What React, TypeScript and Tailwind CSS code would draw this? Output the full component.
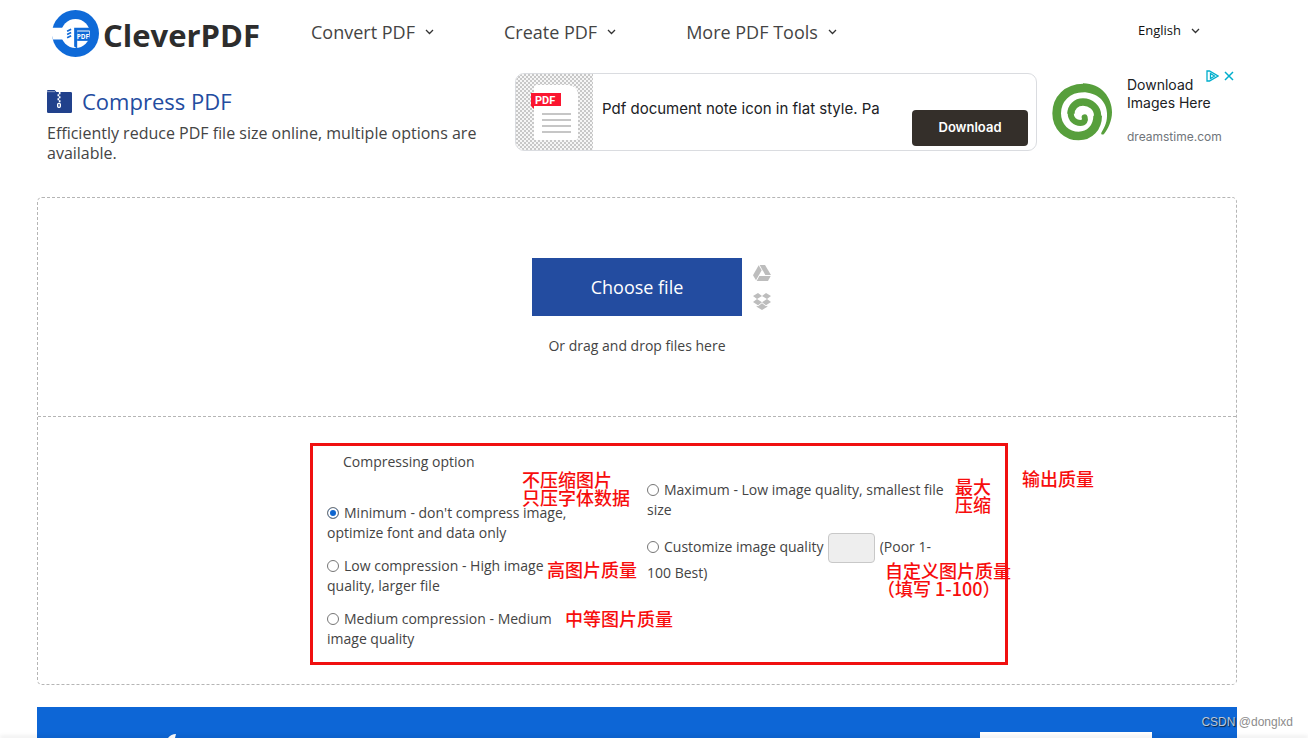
import { useState } from "react";
import type { ReactNode } from "react";

interface OptionProps {
  value:    string;
  selected: string;
  onSelect: (value: string) => void;
  children: ReactNode;
}

const menus = ["Convert PDF", "Create PDF", "More PDF Tools"];

function Caret() {
  return (
    <svg width="9" height="6" viewBox="0 0 9 6" fill="none" stroke="#333" strokeWidth="1.3">
      <path d="M1 1l3.5 3.5L8 1" />
    </svg>
  );
}

function LogoMark() {
  return (
    <svg width="47" height="47" viewBox="0 0 140 140">
      <circle cx="70" cy="70" r="70" fill="#0f6ad8" />
      <circle cx="70" cy="70" r="43" fill="#fff" />
      <path d="M0 53h45v35H3a70 70 0 0 1-3-35z" fill="#fff" />
      <path d="M66 53h56v8H75v54l-9-6z" fill="#0f6ad8" />
      <path d="M75 64h36v28H75z" fill="#0f6ad8" />
      <path d="M45 63l12-6M45 73l12-6M45 83l12-6" stroke="#0f6ad8" strokeWidth="5" />
      <text x="74" y="86" fill="#fff" fontSize="19" fontWeight="700" fontFamily="Open Sans, sans-serif">PDF</text>
    </svg>
  );
}

function FolderIcon() {
  return (
    <svg width="25" height="23" viewBox="0 0 75 69">
      <path d="M3 0h20l5 6h43q4 0 4 4v55q0 4-4 4H4q-4 0-4-4V3q0-3 3-3z" fill="#21418c" />
      <path d="M0 5h24" stroke="#fff" strokeWidth="1.5" />
      <path d="M38 6v7M34 13v6M38 19v6M34 25v6M38 31v6" stroke="#fff" strokeWidth="5" />
      <rect x="32" y="40" width="8" height="12" rx="3" fill="none" stroke="#fff" strokeWidth="4" />
    </svg>
  );
}

function PdfThumb() {
  return (
    <svg className="shrink-0" width="77" height="76" viewBox="0 0 77 76">
      <defs>
        <pattern id="checker" width="4" height="4" patternUnits="userSpaceOnUse">
          <rect width="4" height="4" fill="#f6f6f6" />
          <path d="M0 0h2v2H0zM2 2h2v2H2z" fill="#c8c8c8" />
        </pattern>
      </defs>
      <rect width="77" height="76" fill="url(#checker)" />
      <path d="M21 11h31q10 1 10 10v43q0 2-2 2H20q-2 0-2-2V13q0-2 3-2z" fill="#fff" />
      <path d="M15 19h30v13H18v3l-3-3z" fill="#fb1630" />
      <text x="19" y="30" fill="#fff" fontSize="11" fontWeight="700" fontFamily="Roboto, sans-serif">PDF</text>
      <path d="M26 40h29M26 46h29M26 52h29M26 58h29" stroke="#c6c6c6" strokeWidth="2" />
    </svg>
  );
}

function Spiral() {
  return (
    <svg width="60" height="58" viewBox="12 14 180 174" fill="none" stroke="#579f3c">
      <path d="M105 15C160 15 192 58 192 102C192 128 180 152 168 167C164 171 158 168 160 163C172 145 178 128 177 105C176 70 148 42 104 42Z" fill="#579f3c" stroke="none" />
      <path d="M106 29C58 29 26 62 26 105C26 148 58 173 92 173C125 173 149 148 149 112" strokeWidth="26" />
      <path d="M149 113C149 88 128 71 105 71C84 71 69 86 69 106" strokeWidth="22" />
      <path d="M68 104C68 123 82 134 97 134C109 134 113 126 110 117" strokeWidth="18" strokeLinecap="round" />
    </svg>
  );
}

function DriveIcon() {
  return (
    <svg width="18" height="16" viewBox="0 0 54 48" fill="#bdbdbd">
      <path d="M17 1l9 15L9 46L0 31z" />
      <path d="M20 0h16l18 30H37z" />
      <path d="M19 33h34l-8 15H11z" />
    </svg>
  );
}

function DropboxIcon() {
  return (
    <svg width="18" height="17" viewBox="0 0 54 51" fill="#bdbdbd">
      <path d="M15 0l12 9L12 18L0 9zM39 0L27 9l15 9l12-9zM12 18l15 10l-12 9L0 27zM42 18L27 28l12 9l15-10zM27 31l12 9l4-2v3L27 51L11 41v-3l4 2z" />
    </svg>
  );
}

function Option({ value, selected, onSelect, children }: OptionProps) {
  return (
    <label className="block">
      <input
        type="radio"
        name="compress"
        value={value}
        checked={selected === value}
        onChange={() => onSelect(value)}
        className="mr-[5px] h-3 w-3 appearance-none rounded-full border border-[#767676] bg-white align-[-1px] checked:bg-[#0f66d0] checked:shadow-[inset_0_0_0_2px_#fff]"
      />
      {children}
    </label>
  );
}

function Note({ className, children }: { className: string; children: ReactNode }) {
  return (
    <p className={`absolute whitespace-nowrap font-['Noto_Sans_CJK_SC',sans-serif] text-lg leading-[18px] font-medium text-[#f70d0d] ${className}`}>
      {children}
    </p>
  );
}

export default function App() {
  const [level, setLevel] = useState("minimum");
  const [quality, setQuality] = useState("");

  return (
    <div className="flex min-h-screen flex-col bg-white pl-[37px] font-['Open_Sans',sans-serif] text-[#444]">
      <div className="flex flex-1 flex-col pr-[71px]">
        {/* Header */}
        <header className="flex h-[66px] items-center pl-[15px]">
          <a href="#" className="flex w-[259px] items-center gap-1">
            <LogoMark />
            <span className="pt-1 text-[31px] font-bold text-[#2d2d2d]">CleverPDF</span>
          </a>
          <nav className="flex flex-1 gap-[70px] pb-[2px]">
            {menus.map((m) => (
              <button key={m} type="button" className="flex items-center gap-[10px] text-lg">
                {m}
                <Caret />
              </button>
            ))}
          </nav>
          <label className="mr-[37px] flex items-center pb-1">
            <select aria-label="Language" className="w-[53px] appearance-none bg-transparent text-[13px] text-[#111]">
              <option>English</option>
            </select>
            <Caret />
          </label>
        </header>

        {/* Title + ad */}
        <section className="flex h-[131px]">
          <div className="w-[478px] pt-[19px] pr-3 pl-[10px]">
            <h1 className="flex items-center gap-[10px] text-[22px] leading-8 text-[#234ca0]">
              <FolderIcon />
              Compress PDF
            </h1>
            <p className="mt-[6px] text-base leading-5">
              Efficiently reduce PDF file size online, multiple options are available.
            </p>
          </div>

          <aside className="relative flex flex-1 items-start gap-[15px] pt-[7px] font-['Inter',sans-serif] text-[#202124]">
            <div className="flex h-[78px] w-[522px] overflow-hidden rounded-[9px] border border-[#dadce0]">
              <PdfThumb />
              <p className="flex-1 pt-[23px] pl-[9px] text-[15px] leading-6 whitespace-nowrap">
                Pdf document note icon in flat style. Pa
              </p>
              <button type="button" className="mr-2 mb-1 h-9 w-[116px] self-end rounded bg-[#342f2a] text-[13px] font-semibold text-white">
                Download
              </button>
            </div>
            <div className="flex gap-[15px] pt-[3px]">
              <div className="pt-[7px]">
                <Spiral />
              </div>
              <div>
                <p className="text-sm leading-[18px]">
                  Download
                  <br />
                  Images Here
                </p>
                <p className="mt-4 text-xs leading-[18px] text-[#70757a]">dreamstime.com</p>
              </div>
            </div>
            <div className="absolute top-1 right-[3px] flex items-center gap-[5px]">
              <svg width="13" height="12" viewBox="0 0 13 12" fill="none" stroke="#00aecd" strokeWidth="1.3">
                <path d="M1 1v10h2.500L12 6L3.500 1z" />
                <path d="M4.500 3.500v5l4-2.500z" />
              </svg>
              <button type="button" aria-label="Close ad">
                <svg width="10" height="10" viewBox="0 0 10 10" stroke="#00aecd" strokeWidth="1.5">
                  <path d="M1 1l8 8M9 1L1 9" />
                </svg>
              </button>
            </div>
          </aside>
        </section>

        {/* Upload area */}
        <main className="rounded-[5px] border border-dashed border-[#b5b5b5]">
          <div className="h-[219px] border-b border-dashed border-[#b5b5b5] pt-[60px]">
            <div className="grid grid-cols-[1fr_210px_1fr] gap-x-[11px]">
              <button type="button" className="col-start-2 h-[58px] bg-[#234ca0] text-lg text-white">
                Choose file
              </button>
              <div className="flex flex-col gap-3 pt-[7px]">
                <button type="button" aria-label="Google Drive" className="w-[18px]"><DriveIcon /></button>
                <button type="button" aria-label="Dropbox" className="w-[18px]"><DropboxIcon /></button>
              </div>
            </div>
            <p className="mt-5 text-center text-sm leading-5">Or drag and drop files here</p>
          </div>

          {/* Options */}
          <div className="h-[267px] pt-[35px]">
            <div className="relative mx-auto w-[640px] text-sm leading-5">
              <p className="pl-[26px]">Compressing option</p>
              <div className="grid grid-cols-2">
                <div className="flex flex-col gap-[13px] pt-[31px] pr-[60px] pl-[10px]">
                  <Option value="minimum" selected={level} onSelect={setLevel}>
                    Minimum - don't compress image, optimize font and data only
                  </Option>
                  <Option value="low" selected={level} onSelect={setLevel}>
                    Low compression - High image quality, larger file
                  </Option>
                  <Option value="medium" selected={level} onSelect={setLevel}>
                    Medium compression - Medium image quality
                  </Option>
                </div>
                <div className="flex flex-col gap-[13px] pt-2 pr-[10px] pl-[10px]">
                  <Option value="maximum" selected={level} onSelect={setLevel}>
                    Maximum - Low image quality, smallest file size
                  </Option>
                  <Option value="custom" selected={level} onSelect={setLevel}>
                    Customize image quality{" "}
                    <input
                      type="text"
                      aria-label="Image quality"
                      value={quality}
                      onChange={(e) => setQuality(e.target.value)}
                      className="mx-px h-[30px] w-[47px] rounded border border-[#c8c8c8] bg-[#eee] px-2 align-middle"
                    />{" "}
                    (Poor 1-100 Best)
                  </Option>
                </div>
              </div>

              {/* Red annotations */}
              <div className="pointer-events-none absolute -top-[9px] -left-[7px] h-[222px] w-[698px] border-3 border-[#f01010]" />
              <Note className="top-[18px] left-[205px]">不压缩图片<br />只压字体数据</Note>
              <Note className="top-[108px] left-[230px]">高图片质量</Note>
              <Note className="top-[157px] left-[248px]">中等图片质量</Note>
              <Note className="top-[25px] left-[638px]">最大<br />压缩</Note>
              <Note className="top-[109px] left-[568px]">自定义图片质量<br /><span className="-ml-2">（填写 1-100）</span></Note>
              <Note className="top-[17px] left-[705px]">输出质量</Note>
            </div>
          </div>
        </main>

        {/* Banner */}
        <section className="relative mt-[22px] flex min-h-[31px] flex-1 items-end justify-between bg-[#0d66d6] pr-[85px] pl-[131px]">
          <svg width="9" height="4" viewBox="0 0 9 4">
            <path d="M0 4Q3 0 8 0L7 4z" fill="#fff" />
          </svg>
          <div className="h-[6px] w-[172px] bg-white" />
          <p className="absolute top-[6px] -right-[56px] font-['Liberation_Sans',sans-serif] text-xs leading-[18px] text-[#8c8c8c]">
            <span className="text-[#b9c7d9] [text-shadow:1px_1px_1px_#123]">CSDN</span> @donglxd
          </p>
        </section>
      </div>
      <footer className="relative -ml-[37px] h-px bg-white shadow-[0_-1px_4px_rgba(0,0,0,0.25)]" />
    </div>
  );
}
